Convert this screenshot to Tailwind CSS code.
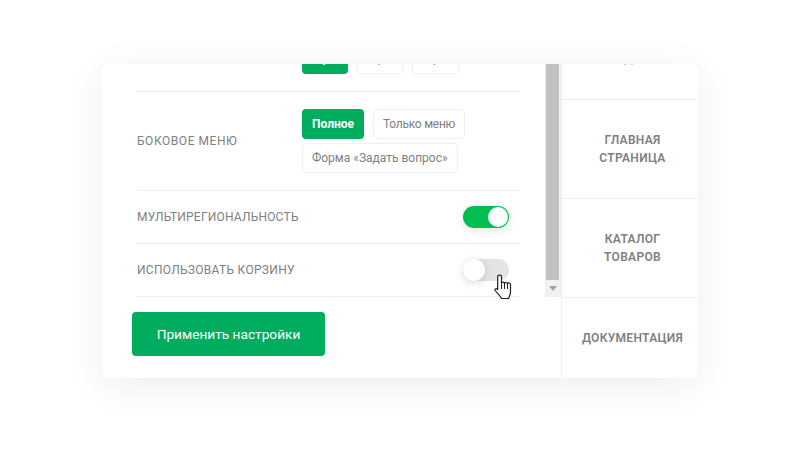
<!DOCTYPE html>
<html lang="en">
<head>
    <meta charset="UTF-8">
    <title>Настройки</title>
    <script src="https://cdn.jsdelivr.net/npm/@tailwindcss/browser@4"></script>
</head>
<body class="bg-white w-[800px] h-[450px] overflow-hidden font-['Roboto',sans-serif] text-[#808080]">
    <div class="w-[800px] h-[450px] pt-[64px] pl-[102px]">
        <!-- Card -->
        <div class="w-[596px] h-[314px] bg-white rounded-lg shadow-[0_8px_40px_rgba(0,0,0,0.07)] flex overflow-hidden">
            <!-- Settings -->
            <div class="w-[460px] border-r border-[#eee] shrink-0">
                <div class="h-[233px] flex">
                    <div class="w-[443px] h-full overflow-hidden pl-[35px] pr-[25px]">
                        <div class="h-[28px] border-b border-[#eee] flex gap-[9px] pl-[165px] overflow-hidden items-end pb-[17px]">
                            <span class="w-[46px] h-[32px] shrink-0 flex items-center justify-center bg-[#00ad5f] text-white text-xs font-bold rounded-sm">Про</span>
                            <span class="w-[46px] h-[32px] shrink-0 flex items-center justify-center border border-[#f0f0f0] text-xs rounded-sm">Про</span>
                            <span class="w-[47px] h-[32px] shrink-0 flex items-center justify-center border border-[#f0f0f0] text-xs rounded-sm">Про</span>
                        </div>
                        <!-- Side menu -->
                        <div class="h-[99px] border-b border-[#eee] flex items-center">
                            <div class="w-[165px] text-xs tracking-[0.55px]">БОКОВОЕ МЕНЮ</div>
                            <div class="flex-1 flex flex-wrap gap-x-[9px] gap-y-[4px]">
                                <span class="h-[30px] px-[10px] flex items-center bg-[#00ad5f] text-white text-xs font-bold rounded-sm">Полное</span>
                                <span class="h-[30px] w-[92px] justify-center flex items-center border border-[#f0f0f0] text-xs tracking-[-0.25px] rounded-sm">Только меню</span>
                                <span class="h-[30px] px-[9px] flex items-center border border-[#f0f0f0] text-xs rounded-sm">Форма «Задать вопрос»</span>
                            </div>
                        </div>
                        <div class="h-[53px] border-b border-[#eee] flex items-center justify-between pr-[11px]">
                            <span class="text-xs tracking-[0.2px]">МУЛЬТИРЕГИОНАЛЬНОСТЬ</span>
                            <div class="w-[46px] h-[22px] rounded-full bg-[#00bf50] flex justify-end p-px shadow-[0_2px_10px_rgba(0,0,0,0.12)]">
                                <div class="w-[20px] h-[20px] rounded-full bg-white"></div>
                            </div>
                        </div>
                        <div class="h-[53px] border-b border-[#eee] flex items-center justify-between pr-[11px]">
                            <span class="text-xs tracking-[0.3px]">ИСПОЛЬЗОВАТЬ КОРЗИНУ</span>
                            <div class="w-[46px] h-[22px] rounded-full bg-[#e4e4e4] flex">
                                <div class="w-[22px] h-[22px] rounded-full bg-white shadow-[0_2px_10px_rgba(0,0,0,0.15)]"></div>
                            </div>
                        </div>
                    </div>
                    <!-- Scrollbar -->
                    <div class="w-[16px] h-full bg-[#f1f1f1] flex flex-col">
                        <div class="w-[13px] ml-px h-[216px] bg-[#c1c1c1]"></div>
                        <svg class="mt-[6px] ml-[4px]" width="8" height="5" viewBox="0 0 8 5"><path d="M0 0h8L4 5z" fill="#a3a3a3"/></svg>
                    </div>
                </div>
                <div class="pl-[30px] pt-[15px]">
                    <button class="w-[193px] h-[44px] bg-[#00ad5f] text-white text-[13.7px] font-normal rounded-sm">Применить настройки</button>
                </div>
            </div>
            <!-- Side nav -->
            <div class="flex-1 flex flex-col text-xs font-semibold text-center leading-[18px] tracking-[0.3px]">
                <div class="h-[36px] pl-[5px] border-b border-[#eee] flex items-end justify-center overflow-hidden"><span class="mb-[32px]">ПОДВАЛ</span></div>
                <div class="h-[99px] pl-[5px] border-b border-[#eee] flex items-center justify-center">ГЛАВНАЯ<br>СТРАНИЦА</div>
                <div class="h-[99px] pl-[5px] border-b border-[#eee] flex items-center justify-center">КАТАЛОГ<br>ТОВАРОВ</div>
                <div class="flex-1 pl-[5px] flex items-center justify-center">ДОКУМЕНТАЦИЯ</div>
            </div>
        </div>
    </div>
    <!-- Cursor -->
    <svg class="absolute left-[494px] top-[274px]" width="18" height="26" viewBox="0 0 18 26">
        <path d="M3.7 3a1.900 1.900 0 0 1 3.800 0V9.500a1.500 1.500 0 0 1 3 .3a1.500 1.500 0 0 1 3 .4a1.500 1.500 0 0 1 3 .6V18c0 3-1 4-2 6.500H7.500C6 21.500 3 19 1.200 16.500c-.8-1.200.6-2.700 2-1.500l.5.5z" fill="#fff" stroke="#222" stroke-width="1.200" stroke-linejoin="round"/>
        <path d="M7.500 9.500V15M10.500 9.800V15M13.500 10.200V15" fill="none" stroke="#222" stroke-width="1"/>
    </svg>
</body>
</html>
